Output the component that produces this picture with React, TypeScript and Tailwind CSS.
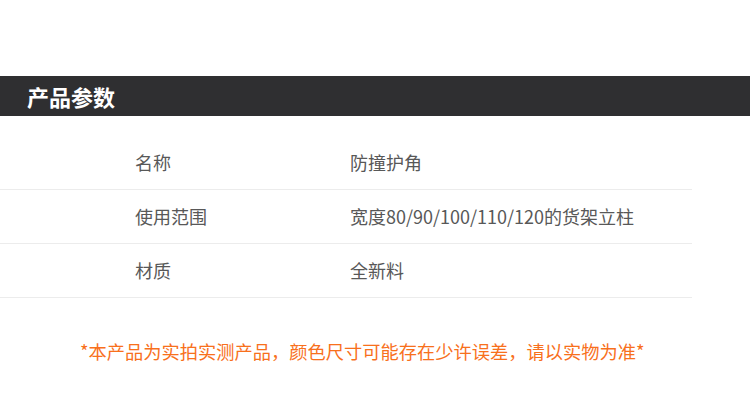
const rows = [
  { label: "名称", value: "防撞护角" },
  { label: "使用范围", value: "宽度80/90/100/110/120的货架立柱" },
  { label: "材质", value: "全新料" },
];

export default function App() {
  return (
    <div
      className="h-[414px] w-[750px] overflow-hidden bg-white"
      style={{ fontFamily: '"Noto Sans CJK SC", "Noto Sans", sans-serif' }}
    >
      <div className="mt-[76px] flex h-[40px] items-center bg-[#2f2f31] pl-[27px]">
        <h2 className="text-[22px] font-bold leading-none text-white">产品参数</h2>
      </div>

      <div className="mt-[20px] w-[692px]">
        {rows.map((row) => (
          <div
            key={row.label}
            className="flex h-[54px] items-center border-b border-[#ececec] text-[18px] text-[#585858]"
          >
            <span className="w-[350px] shrink-0 pl-[135px]">{row.label}</span>
            <span>{row.value}</span>
          </div>
        ))}
      </div>

      <p className="mt-[44px] pl-[80px] text-[18.25px] leading-none text-[#f8701c]">
        *本产品为实拍实测产品，颜色尺寸可能存在少许误差，请以实物为准*
      </p>
    </div>
  );
}
